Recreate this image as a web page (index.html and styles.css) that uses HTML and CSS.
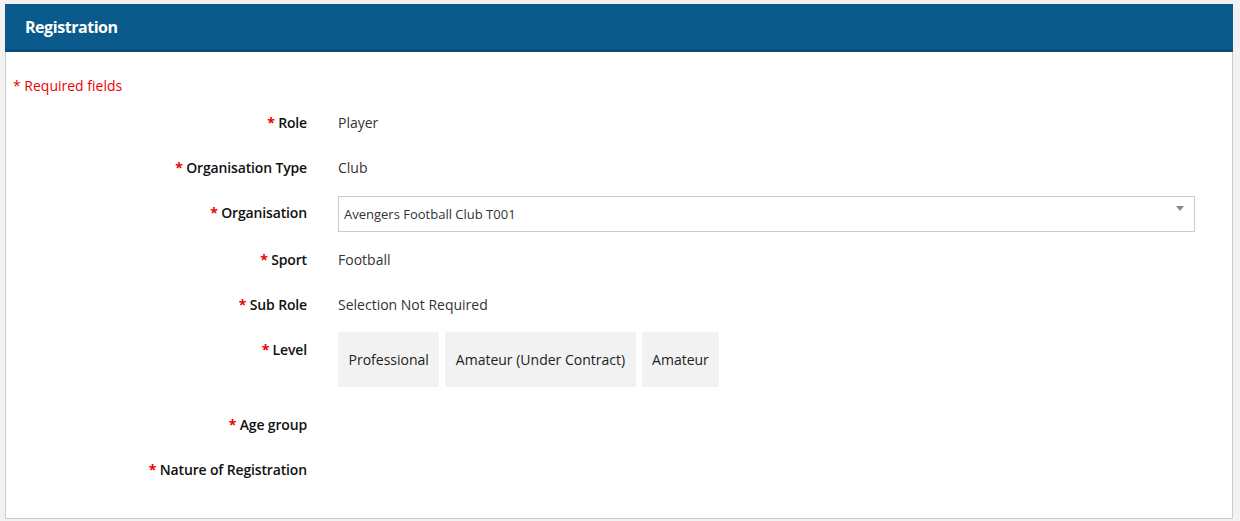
FILE: index.html
```html
<!DOCTYPE html>
<html>
<head>
<meta charset="utf-8">
<link rel="stylesheet" href="styles.css">
</head>
<body>
<div class="panel">
  <div class="panel-head">Registration</div>
  <div class="panel-body">
    <div class="required-note">* Required fields</div>
    <div class="row">
      <div class="label"><span class="star">*</span> Role</div>
      <div class="value">Player</div>
    </div>
    <div class="row">
      <div class="label"><span class="star">*</span> Organisation Type</div>
      <div class="value">Club</div>
    </div>
    <div class="row row-select">
      <div class="label"><span class="star">*</span> Organisation</div>
      <div class="value value-select">
        <div class="select"><span>Avengers Football Club T001</span><span class="arrow"></span></div>
      </div>
    </div>
    <div class="row">
      <div class="label"><span class="star">*</span> Sport</div>
      <div class="value">Football</div>
    </div>
    <div class="row">
      <div class="label"><span class="star">*</span> Sub Role</div>
      <div class="value">Selection Not Required</div>
    </div>
    <div class="row row-level">
      <div class="label"><span class="star">*</span> Level</div>
      <div class="value options">
        <div class="opt">Professional</div>
        <div class="opt">Amateur (Under Contract)</div>
        <div class="opt">Amateur</div>
      </div>
    </div>
    <div class="row">
      <div class="label"><span class="star">*</span> Age group</div>
      <div class="value"></div>
    </div>
    <div class="row">
      <div class="label"><span class="star">*</span> Nature of Registration</div>
      <div class="value"></div>
    </div>
  </div>
</div>
</body>
</html>
```
FILE: styles.css
```css
html, body {
  margin: 0;
  padding: 0;
  background: #f2f2f2;
}
body {
  padding: 4px 7px 3px 5px;
  font-family: "Open Sans", "Noto Sans", sans-serif;
  font-size: 14px;
  color: #333;
}
.panel {
  background: #fff;
}
.panel-head {
  background: #0a5a8b;
  border-bottom: 3px solid #07507d;
  color: #fff;
  font-weight: 700;
  font-size: 16px;
  height: 45px;
  line-height: 47px;
  padding-left: 20px;
  letter-spacing: -0.45px;
}
.panel-body {
  border: 1px solid #ccc;
  border-top: none;
  padding: 24px 37px 35px 0;
}
.required-note {
  color: #e00;
  line-height: 20px;
  padding-left: 7px;
  margin-bottom: 10px;
}
.star {
  color: #e00;
  font-weight: 700;
}
.row {
  display: grid;
  grid-template-columns: 301px 1fr;
  column-gap: 31px;
  min-height: 30px;
  margin-bottom: 15px;
}
.row:last-child {
  margin-bottom: 0;
}
.row-select {
  margin-bottom: 11px;
}
.label {
  text-align: right;
  font-weight: 600;
  color: #111;
  line-height: 20px;
  padding-top: 7px;
  letter-spacing: -0.15px;
}
.value {
  line-height: 20px;
  padding-top: 7px;
}
.value-select {
  padding-top: 0;
}
.select {
  height: 34px;
  border: 1px solid #ccc;
  display: flex;
  align-items: center;
  justify-content: space-between;
  padding: 0 10px 0 5px;
  font-size: 13px;
  color: #333;
}
.arrow {
  width: 0;
  height: 0;
  border-left: 4px solid transparent;
  border-right: 4px solid transparent;
  border-top: 5px solid #888;
  margin-bottom: 12px;
}
.row-level {
  min-height: 60px;
}
.options {
  display: flex;
  gap: 6px;
  padding-top: 0;
  margin-top: -1px;
  align-items: flex-start;
}
.opt {
  background: #f2f2f2;
  height: 55px;
  line-height: 55px;
  padding: 0 10.5px;
  color: #222;
}
```
